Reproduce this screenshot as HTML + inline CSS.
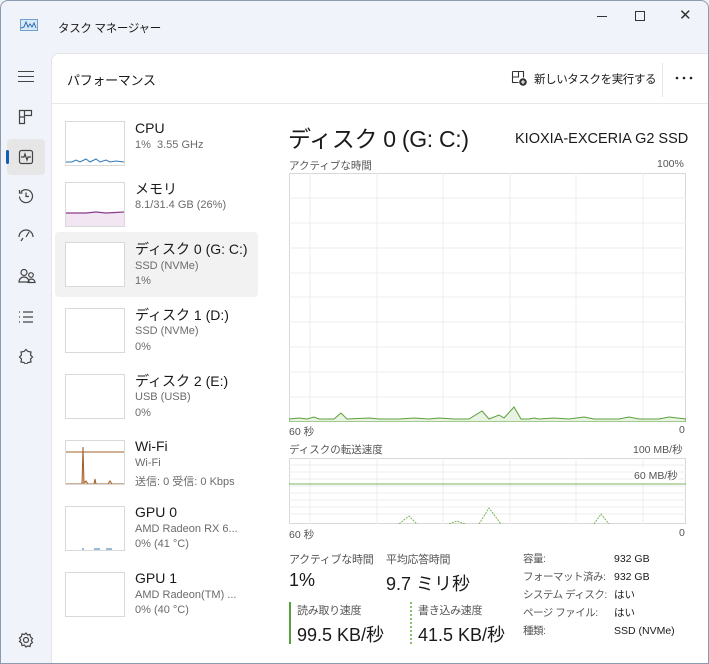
<!DOCTYPE html>
<html><head><meta charset="utf-8"><style>
*{margin:0;padding:0;box-sizing:border-box}
body{width:709px;height:664px;overflow:hidden;background:#eef2f7;font-family:"Liberation Sans","Noto Sans CJK JP",sans-serif;color:#1a1a1a;position:relative}
.win{position:absolute;left:0;top:0;width:709px;height:664px;border:1px solid #8a9bb0;border-radius:8px 8px 0 0;background:#f0f3f9;overflow:hidden}
.abs{position:absolute;white-space:nowrap}
.panel{position:absolute;left:50px;top:52px;width:660px;height:620px;background:#fff;border-top-left-radius:8px;border:1px solid #e5e5e5}
.thumb{position:absolute;left:64px;width:60px;height:45px;border:1px solid #d9d9d9;background:#fff}
.t1{position:absolute;left:134px;font-size:14px;color:#1a1a1a;white-space:nowrap}
.t2{position:absolute;left:134px;font-size:11px;color:#6b6b6b;white-space:nowrap}
.s{font-size:10.5px;color:#555}
</style></head><body>
<div class="win">
<svg class="abs" style="left:19px;top:18px" width="18" height="12"><rect x="0.5" y="0.5" width="17" height="11" fill="#dbe9f7" stroke="#6fa0d0"/><polyline points="1,9 4,8 6,3 8,8 10,5 12,8 14,4 16,9" fill="none" stroke="#2b6fb3" stroke-width="1"/></svg>
<div class="abs" style="left:57px;top:19px;font-size:11.5px;letter-spacing:-0.3px">タスク マネージャー</div>
<div class="abs" style="left:596px;top:15px;width:10px;height:1px;background:#333"></div>
<div class="abs" style="left:634px;top:10px;width:10px;height:10px;border:1px solid #333"></div>
<div class="abs" style="left:678px;top:5px;font-size:15px;color:#333">✕</div>
<div class="abs" style="left:17px;top:70px;width:16px;height:1px;background:#444;box-shadow:0 5px 0 #444,0 10px 0 #444"></div>
<svg class="abs" style="left:17px;top:108px" width="16" height="16" fill="none" stroke="#444" stroke-width="1.2"><path d="M1.5 1.5h5v13h-5zM6.5 1.5h7v5h-7zM1.5 8h5"/></svg>
<div class="abs" style="left:6px;top:138px;width:38px;height:36px;background:#e6e6e6;border-radius:4px"></div>
<div class="abs" style="left:5px;top:149px;width:3px;height:14px;background:#0f5fb5;border-radius:2px"></div>
<svg class="abs" style="left:17px;top:148px" width="16" height="16" fill="none" stroke="#444" stroke-width="1.2"><rect x="1.5" y="1.5" width="13" height="13" rx="2"/><polyline points="3,8 6,8 7,5 9,11 10,8 13,8"/></svg>
<svg class="abs" style="left:17px;top:187px" width="16" height="16" fill="none" stroke="#444" stroke-width="1.2"><path d="M3 4A6.5 6.5 0 1 1 1.5 8.5M1.5 2v3h3M8 4.5v4h3"/></svg>
<svg class="abs" style="left:17px;top:228px" width="16" height="14" fill="none" stroke="#444" stroke-width="1.2"><path d="M1 8a7 7 0 0 1 14 0M8 8l3-5M3 12l2-3"/></svg>
<svg class="abs" style="left:17px;top:267px" width="18" height="16" fill="none" stroke="#444" stroke-width="1.2"><circle cx="6" cy="4.5" r="3"/><path d="M1 14a5 5 0 0 1 10 0z"/><circle cx="13" cy="7" r="2.3"/><path d="M10 14.5a3.5 3.5 0 0 1 7 0z"/></svg>
<svg class="abs" style="left:17px;top:309px" width="16" height="14" fill="none" stroke="#444" stroke-width="1.2"><path d="M1 2h1M1 7h1M1 12h1M5 2h10M5 7h10M5 12h10"/></svg>
<svg class="abs" style="left:17px;top:347px" width="16" height="16" fill="none" stroke="#444" stroke-width="1.2"><path d="M8 1.5l2 2 3 .5-.5 3 2 2-2 2 .5 3-3 .5-2 2-2-2-3-.5.5-3-2-2 2-2-.5-3 3-.5z"/></svg>
<svg class="abs" style="left:17px;top:631px" width="16" height="16" fill="none" stroke="#444" stroke-width="1.2"><circle cx="8" cy="8" r="2.5"/><path d="M8 1l1.5 2 2.5-.5.5 2.5 2 1.5-1.2 2 1.2 2-2 1.5-.5 2.5-2.5-.5L8 15l-1.5-2-2.5.5-.5-2.5-2-1.5L2.7 8 1.5 6l2-1.5.5-2.5 2.5.5z"/></svg>

<div class="panel"></div>
<div class="abs" style="left:66px;top:69px;font-size:13px;letter-spacing:-0.3px">パフォーマンス</div>
<svg class="abs" style="left:510px;top:69px" width="16" height="16" fill="none" stroke="#333" stroke-width="1.1"><path d="M1.5 1.5h11v6M1.5 1.5v11h6M1.5 7h6v-5.5"/><circle cx="12" cy="12" r="3.8" fill="#333" stroke="none"/><path d="M12 10v4M10 12h4" stroke="#fff"/></svg>
<div class="abs" style="left:533px;top:70px;font-size:11.5px;letter-spacing:-0.4px">新しいタスクを実行する</div>
<div class="abs" style="left:661px;top:62px;width:1px;height:34px;background:#e5e5e5"></div>
<svg class="abs" style="left:674px;top:75px" width="18" height="4" fill="#222"><circle cx="2" cy="2" r="1.3"/><circle cx="9" cy="2" r="1.3"/><circle cx="16" cy="2" r="1.3"/></svg>
<div class="abs" style="left:51px;top:102px;width:658px;height:1px;background:#e8e8e8"></div>

<div class="abs" style="left:54px;top:231px;width:203px;height:65px;background:#f2f2f2;border-radius:4px"></div>
<div class="thumb" style="top:120px"><svg width="58" height="43"><polyline points="0,40 6,40 10,38 14,40 20,37 24,40 30,37 34,40 40,38 44,40 50,39 58,40" fill="none" stroke="#2f78b7" stroke-width="1"/></svg></div>
<div class="t1" style="top:119px">CPU</div><div class="t2" style="top:138px">1%&nbsp; 3.55 GHz</div>
<div class="thumb" style="top:181px"><svg width="58" height="43"><rect x="0" y="30" width="58" height="13" fill="#f3e6f3"/><polyline points="0,30 20,30 30,29 40,30 58,29" fill="none" stroke="#8b3a8b" stroke-width="1.2"/></svg></div>
<div class="t1" style="top:178px">メモリ</div><div class="t2" style="top:198px">8.1/31.4 GB (26%)</div>
<div class="thumb" style="top:241px"></div>
<div class="t1" style="top:238px">ディスク 0 (G: C:)</div><div class="t2" style="top:259px">SSD (NVMe)</div><div class="t2" style="top:274px">1%</div>
<div class="thumb" style="top:307px"></div>
<div class="t1" style="top:304px">ディスク 1 (D:)</div><div class="t2" style="top:324px">SSD (NVMe)</div><div class="t2" style="top:340px">0%</div>
<div class="thumb" style="top:373px"></div>
<div class="t1" style="top:370px">ディスク 2 (E:)</div><div class="t2" style="top:390px">USB (USB)</div><div class="t2" style="top:406px">0%</div>
<div class="thumb" style="top:439px"><svg width="58" height="43"><line x1="0" y1="11" x2="58" y2="11" stroke="#a0602a"/><polyline points="0,43 16,43 17,6 18,42 20,40 22,43 28,43 29,38 30,43 42,43 44,40 46,43 58,43" fill="#e8c7a8" stroke="#a0602a"/></svg></div>
<div class="t1" style="top:437px">Wi-Fi</div><div class="t2" style="top:456px">Wi-Fi</div><div class="t2" style="top:472px">送信: 0 受信: 0 Kbps</div>
<div class="thumb" style="top:505px"><svg width="58" height="43"><path d="M16 42h2M28 42h6M40 42h6" stroke="#2f78b7"/></svg></div>
<div class="t1" style="top:503px">GPU 0</div><div class="t2" style="top:522px">AMD Radeon RX 6...</div><div class="t2" style="top:537px">0% (41 °C)</div>
<div class="thumb" style="top:571px"></div>
<div class="t1" style="top:569px">GPU 1</div><div class="t2" style="top:588px">AMD Radeon(TM) ...</div><div class="t2" style="top:603px">0% (40 °C)</div>

<div class="abs" style="left:287px;top:119px;font-size:23px;letter-spacing:-0.3px">ディスク 0 (G: C:)</div>
<div class="abs" style="left:514px;top:130px;font-size:14.5px">KIOXIA-EXCERIA G2 SSD</div>
<div class="abs s" style="left:288px;top:157px">アクティブな時間</div>
<div class="abs s" style="left:656px;top:157px">100%</div>
<svg class="abs" style="left:288px;top:172px" width="397" height="249">
<rect x="0.5" y="0.5" width="396" height="248" fill="#fff" stroke="#d8d8d8"/>
<g stroke="#ececec"><path d="M0 25h397M0 50h397M0 75h397M0 100h397M0 124h397M0 149h397M0 174h397M0 199h397M0 224h397M21 0v249M88 0v249M154 0v249M221 0v249M287 0v249M354 0v249"/></g>
<polygon points="0,246 10,245 18,246 25,244 30,246 45,246 52,240 58,246 80,245 90,246 110,246 125,245 140,246 150,245 165,246 180,246 193,238 200,246 210,242 215,245 225,234 232,246 240,246 245,245 250,246 265,245 280,246 295,244 305,246 330,246 340,244 350,246 370,246 380,244 397,246 397,249 0,249" fill="#e9f3e2" stroke="#5aa03c" stroke-width="1"/>
</svg>
<div class="abs s" style="left:288px;top:423px">60 秒</div><div class="abs s" style="left:678px;top:423px">0</div>
<div class="abs s" style="left:288px;top:441px">ディスクの転送速度</div><div class="abs s" style="left:632px;top:441px">100 MB/秒</div>
<svg class="abs" style="left:288px;top:457px" width="397" height="66">
<rect x="0.5" y="0.5" width="396" height="65" fill="#fff" stroke="#d8d8d8"/>
<g stroke="#ececec"><path d="M0 7h397M0 14h397M0 21h397M0 28h397M0 35h397M0 42h397M0 49h397M0 56h397M21 0v66M88 0v66M154 0v66M221 0v66M287 0v66M354 0v66"/></g>
<line x1="0" y1="26" x2="397" y2="26" stroke="#7ab55c"/>
<path d="M110 66L120 58L128 66M160 66L168 63L176 66M190 66L200 50L212 66M305 66L312 56L320 66" fill="none" stroke="#7ab55c" stroke-dasharray="2,1"/>
</svg>
<div class="abs s" style="left:633px;top:467px;background:#fff">60 MB/秒</div>
<div class="abs s" style="left:288px;top:526px">60 秒</div><div class="abs s" style="left:678px;top:526px">0</div>

<div class="abs s" style="left:288px;top:550px;font-size:11px;letter-spacing:-0.3px">アクティブな時間</div>
<div class="abs" style="left:288px;top:569px;font-size:18px">1%</div>
<div class="abs s" style="left:385px;top:550px;font-size:11px;letter-spacing:-0.3px">平均応答時間</div>
<div class="abs" style="left:385px;top:569px;font-size:18px">9.7 ミリ秒</div>
<div class="abs" style="left:288px;top:601px;width:2px;height:42px;background:#5aa03c"></div>
<div class="abs s" style="left:296px;top:601px;font-size:11px;letter-spacing:-0.3px">読み取り速度</div>
<div class="abs" style="left:296px;top:620px;font-size:18px">99.5 KB/秒</div>
<div class="abs" style="left:409px;top:601px;width:0;height:42px;border-left:2px dotted #8cc06c"></div>
<div class="abs s" style="left:417px;top:601px;font-size:11px;letter-spacing:-0.3px">書き込み速度</div>
<div class="abs" style="left:417px;top:620px;font-size:18px">41.5 KB/秒</div>
<div class="abs s" style="left:522px;top:549px;line-height:18px;font-size:10.5px;letter-spacing:-0.5px">容量:<br>フォーマット済み:<br>システム ディスク:<br>ページ ファイル:<br>種類:</div>
<div class="abs" style="left:613px;top:549px;line-height:18px;font-size:10.5px;color:#1a1a1a">932 GB<br>932 GB<br>はい<br>はい<br>SSD (NVMe)</div>
</div>
</body></html>
